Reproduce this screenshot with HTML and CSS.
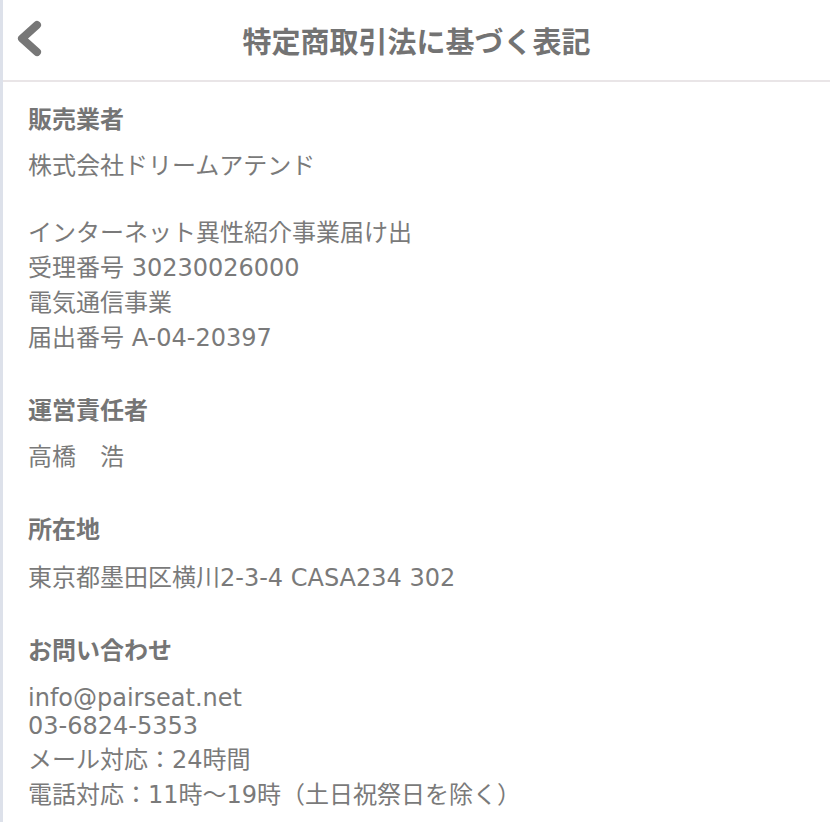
FILE: index.html
```html
<!DOCTYPE html>
<html lang="ja">
<head>
<meta charset="utf-8">
<title>特定商取引法に基づく表記</title>
<link rel="stylesheet" href="styles.css">
</head>
<body>
<div class="page">
  <header class="header">
    <a class="back" href="#" aria-label="戻る">
      <svg width="60" height="80" viewBox="0 0 60 80">
        <polyline points="37,25 22,38.5 37,52" fill="none" stroke="#777777" stroke-width="8" stroke-linecap="round" stroke-linejoin="round"/>
      </svg>
    </a>
    <h1 class="title">特定商取引法に基づく表記</h1>
  </header>
  <main class="content">
    <section class="section">
      <h2 class="label">販売業者</h2>
      <p class="text">株式会社ドリームアテンド</p>
      <p class="text">インターネット異性紹介事業届け出<br>受理番号 30230026000<br>電気通信事業<br>届出番号 A-04-20397</p>
    </section>
    <section class="section">
      <h2 class="label">運営責任者</h2>
      <p class="text">高橋　浩</p>
    </section>
    <section class="section">
      <h2 class="label">所在地</h2>
      <p class="text text-address">東京都墨田区横川2-3-4 CASA234 302</p>
    </section>
    <section class="section">
      <h2 class="label">お問い合わせ</h2>
      <p class="text text-contact">info@pairseat.net<br>03-6824-5353<br>メール対応：24時間<br>電話対応：11時〜19時（土日祝祭日を除く）</p>
    </section>
  </main>
</div>
</body>
</html>
```

FILE: styles.css
```css
html, body {
  margin: 0;
  padding: 0;
  background: #ffffff;
}

body {
  font-family: "DejaVu Sans", "Noto Sans CJK JP", sans-serif;
  color: #777777;
}

.page {
  min-height: 822px;
  border-left: 3px solid #dde1ea;
  box-sizing: border-box;
}

.header {
  height: 80px;
  border-bottom: 2px solid #e9e5e7;
  display: flex;
  align-items: center;
  justify-content: center;
  position: relative;
}

.back {
  position: absolute;
  left: -3px;
  top: 0;
  width: 60px;
  height: 80px;
  display: block;
}

.back svg {
  display: block;
}

.title {
  margin: 0;
  font-family: "Noto Sans CJK JP", sans-serif;
  font-size: 29px;
  font-weight: 700;
  color: #737373;
  line-height: 1;
  letter-spacing: 0;
}

.content {
  padding: 18px 20px 0 25px;
}

.section {
  margin-bottom: 38px;
}

.label {
  margin: 0 0 11px 0;
  font-size: 24px;
  font-weight: 700;
  line-height: normal;
  color: #757575;
}

.text {
  margin: 0 0 32px 0;
  font-size: 24px;
  font-weight: 400;
  line-height: normal;
  color: #7a7a7a;
}

.text:last-child {
  margin-bottom: 0;
}

.text-address {
  padding-top: 2px;
}

.text-contact {
  padding-top: 7px;
}
```
